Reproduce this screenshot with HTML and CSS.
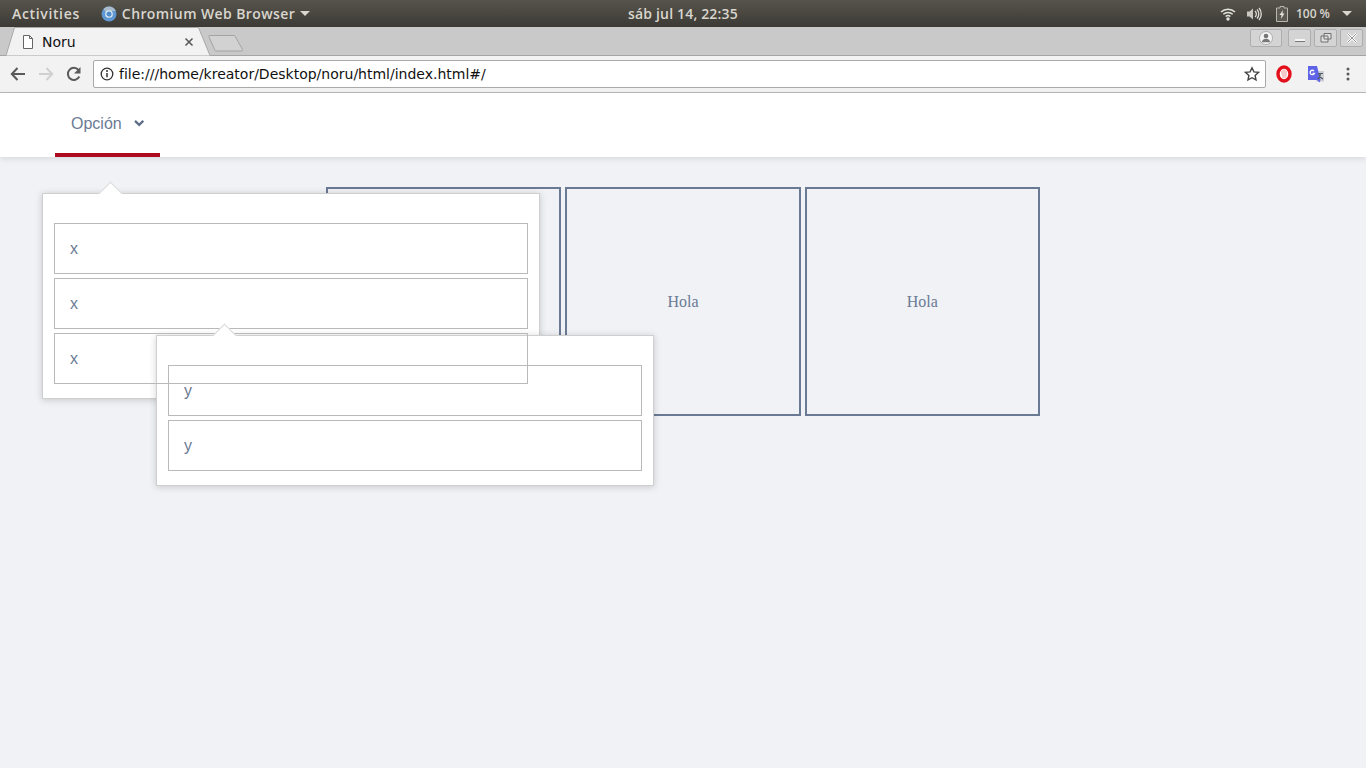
FILE: index.html
```html
<!DOCTYPE html>
<html lang="es">
<head>
  <meta charset="UTF-8">
  <title>Noru</title>
  <link rel="stylesheet" href="styles.css">
</head>
<body>

<!-- Desktop top bar -->
<div class="topbar">
  <div class="topbar-left">
    <span class="activities">Activities</span>
    <span class="app-menu">
      <svg class="chromium" width="16" height="16" viewBox="0 0 16 16">
        <circle cx="8" cy="8" r="7.5" fill="#5e97d2"/>
        <path d="M8 .5A7.5 7.5 0 0 1 14.800 5H8a3 3 0 0 0-2.700 1.700L2.500 2.900A7.500 7.500 0 0 1 8 .5z" fill="#a9bccd"/>
        <circle cx="8" cy="8" r="3.200" fill="#4f8ccc" stroke="#dbe6f0" stroke-width="1.300"/>
      </svg>
      <span>Chromium Web Browser</span>
      <i class="caret"></i>
    </span>
  </div>
  <div class="clock">sáb jul 14, 22:35</div>
  <div class="topbar-right">
    <svg width="16" height="14" viewBox="0 0 16 14">
      <path d="M1 5a10 10 0 0 1 14 0M3.300 7.300a7 7 0 0 1 9.400 0M5.600 9.500a3.600 3.600 0 0 1 4.800 0" fill="none" stroke="#e4e2dc" stroke-width="1.500"/>
      <circle cx="8" cy="12" r="1.700" fill="#e4e2dc"/>
    </svg>
    <svg class="sound" width="16" height="14" viewBox="0 0 16 14">
      <path d="M1 4.500h2.500L7 1.500v11l-3.500-3H1z" fill="#c9c7c0"/>
      <path d="M9 4a4 4 0 0 1 0 6M11 2.500a6.500 6.500 0 0 1 0 9M13 1a9 9 0 0 1 0 12" fill="none" stroke="#dedcd6" stroke-width="1.300"/>
    </svg>
    <svg class="battery" width="12" height="16" viewBox="0 0 12 16">
      <path d="M4 .5h4v1.500h3.500v13.500H.5V2H4z" fill="#5c5a53" stroke="#b8b6af"/>
      <path d="M7 4 3.500 9h2L5 13l3.500-5.500h-2z" fill="#e4e2dc"/>
    </svg>
    <span class="battery-text">100 %</span>
    <i class="caret caret-end"></i>
  </div>
</div>

<!-- Tab strip -->
<div class="tabstrip">
  <div class="tab">
    <svg class="tab-shape" width="206" height="29" viewBox="0 0 206 29">
      <path d="M0 28.500 8.500 .5H192.500L204 28.500" fill="#f2f2f2" stroke="#a8a8a8"/>
    </svg>
    <svg class="tab-file" width="12" height="14" viewBox="0 0 12 14">
      <path d="M1.500 .5h6l3 3v10h-9z M7.500 .5v3h3" fill="#fff" stroke="#666"/>
    </svg>
    <span class="tab-title">Noru</span>
    <svg class="tab-close" width="10" height="10" viewBox="0 0 10 10">
      <path d="M1.500 1.500l7 7M8.500 1.500l-7 7" stroke="#555" stroke-width="1.500"/>
    </svg>
  </div>
  <svg class="new-tab" width="36" height="18" viewBox="0 0 36 18">
    <path d="M1 1.500H26a1 1 0 0 1 1 .6L34.500 15.500a1 1 0 0 1-1 1.500H8a1 1 0 0 1-1-.6L.8 2.500a.7.7 0 0 1 .2-1z" fill="#d2d2d2" stroke="#a3a3a3"/>
  </svg>
  <div class="win-buttons">
    <span class="win-btn win-user">
      <svg width="14" height="14" viewBox="0 0 14 14">
        <circle cx="7" cy="7" r="6.500" fill="#f4f4f4" stroke="#8c8c8c" stroke-width=".6"/>
        <circle cx="7" cy="5" r="2.300" fill="#777"/>
        <path d="M2.800 11.300c.6-2.700 2.200-3.500 4.200-3.500s3.600.8 4.200 3.500" fill="#777"/>
      </svg>
    </span>
    <span class="win-btn">
      <svg width="12" height="10" viewBox="0 0 12 10"><path d="M1 7h10" stroke="#f6f6f6" stroke-width="2"/><path d="M1 8.500h10" stroke="#777"/></svg>
    </span>
    <span class="win-btn">
      <svg width="12" height="10" viewBox="0 0 12 10"><path d="M4 .5h7v5.500H4z M1 3h7v6H1z" fill="#e2e2e2" stroke="#6f6f6f"/></svg>
    </span>
    <span class="win-btn">
      <svg width="12" height="10" viewBox="0 0 12 10"><path d="M1.500 .5l9 9M10.500 .5l-9 9" stroke="#fff" stroke-width="2.400"/><path d="M1.500 .5l9 9M10.500 .5l-9 9" stroke="#777" stroke-width=".8"/></svg>
    </span>
  </div>
</div>

<!-- Address bar -->
<div class="toolbar">
  <svg class="nav-icon" width="16" height="14" viewBox="0 0 16 14">
    <path d="M15 7H2M7.500 1 1.800 7l5.700 6" fill="none" stroke="#5a5a5a" stroke-width="2"/>
  </svg>
  <svg class="nav-icon" width="16" height="14" viewBox="0 0 16 14">
    <path d="M1 7h13M8.500 1l5.700 6-5.700 6" fill="none" stroke="#d0d0d0" stroke-width="2"/>
  </svg>
  <svg class="nav-icon" width="16" height="16" viewBox="0 0 16 16">
    <path d="M13.300 10.500A6 6 0 1 1 12.500 4" fill="none" stroke="#5a5a5a" stroke-width="2"/>
    <path d="M14.500 1v6.500H8z" fill="#5a5a5a"/>
  </svg>
  <div class="omnibox">
    <svg width="14" height="14" viewBox="0 0 14 14">
      <circle cx="7" cy="7" r="5.800" fill="none" stroke="#333" stroke-width="1.300"/>
      <path d="M7 6v4.200" stroke="#333" stroke-width="1.500"/>
      <circle cx="7" cy="4" r="1" fill="#333"/>
    </svg>
    <span class="url">file:///home/kreator/Desktop/noru/html/index.html#/</span>
    <svg class="star" width="16" height="16" viewBox="0 0 16 16">
      <path d="M8 1.800l1.900 4.100 4.500.5-3.300 3 .9 4.500L8 11.700l-4 2.200.9-4.500-3.300-3 4.500-.5z" fill="none" stroke="#444" stroke-width="1.400"/>
    </svg>
  </div>
  <div class="extensions">
    <svg width="16" height="18" viewBox="0 0 16 18">
      <ellipse cx="8" cy="9" rx="6" ry="7" fill="#fff" stroke="#e3101c" stroke-width="3.400"/>
      <path d="M5 8V5.500h1.200V4.500h1V4h1.600v.5h1V6H11v4l-1 3H6.500z" fill="#f3c9c9"/>
    </svg>
    <svg width="17" height="17" viewBox="0 0 17 17">
      <path d="M9 5h8v10.500H9z" fill="#cfcfd4"/>
      <path d="M1 0h9l3.500 14 -1 2.500L10 14H1z" fill="#5f63e6"/>
      <path d="M11 7.500h5M13.500 7.500c0 2.500-1 4-2.500 5.500M12 8.500c.5 2 2 3.500 4 4.500" fill="none" stroke="#4f5a64" stroke-width="1.100"/>
      <path d="M7 5a2.200 2.200 0 1 0 .3 2.500H5.500" fill="none" stroke="#fff" stroke-width="1.300"/>
    </svg>
    <svg class="dots" width="4" height="14" viewBox="0 0 4 14">
      <circle cx="2" cy="2" r="1.500" fill="#5a5a5a"/>
      <circle cx="2" cy="7" r="1.500" fill="#5a5a5a"/>
      <circle cx="2" cy="12" r="1.500" fill="#5a5a5a"/>
    </svg>
  </div>
</div>

<!-- Page content -->
<div class="page">
  <nav class="menu">
    <div class="menu-item">
      <span>Opción</span>
      <svg class="chevron" width="12" height="8" viewBox="0 0 12 8">
        <path d="M1.200 1.500 6 6.200l4.800-4.700" fill="none" stroke="#5f6e88" stroke-width="2.600"/>
      </svg>

      <div class="dropdown dropdown-main">
        <div class="drop-list">
          <div class="drop-row">x</div>
          <div class="drop-row">x</div>
          <div class="drop-row has-sub">x
            <div class="dropdown dropdown-sub">
              <div class="drop-list">
                <div class="drop-row">y</div>
                <div class="drop-row">y</div>
              </div>
            </div>
          </div>
        </div>
      </div>
    </div>
  </nav>

  <main class="cards">
    <div class="card">Hola</div>
    <div class="card">Hola</div>
    <div class="card">Hola</div>
  </main>
</div>

</body>
</html>
```

FILE: styles.css
```css
* {
  box-sizing: border-box;
}
body {
  margin: 0;
  height: 100vh;
  display: flex;
  flex-direction: column;
  overflow: hidden;
  background: #f0f2f6;
  font-family: "Liberation Sans", sans-serif;
}

/* Desktop top bar */
.topbar {
  height: 27px;
  flex: none;
  display: grid;
  grid-template-columns: 1fr auto 1fr;
  align-items: center;
  padding: 0 12px;
  background: linear-gradient(#57544c, #3c3a35);
  color: #d9d6ce;
  font-family: "Open Sans", sans-serif;
  font-size: 14px;
  font-weight: 600;
}
.topbar-left {
  display: flex;
  align-items: center;
}
.activities {
  letter-spacing: 0.65px;
}
.app-menu {
  display: flex;
  align-items: center;
  margin-left: 21px;
  letter-spacing: 0.4px;
}
.chromium {
  margin-right: 5px;
}
.caret {
  display: inline-block;
  width: 0;
  height: 0;
  margin-left: 5px;
  border-left: 5px solid transparent;
  border-right: 5px solid transparent;
  border-top: 5px solid #d9d6ce;
}
.caret-end {
  margin-left: 12px;
}
.clock {
  letter-spacing: 0.17px;
}
.topbar-right {
  display: flex;
  align-items: center;
  justify-content: flex-end;
  margin-right: 2px;
}
.sound {
  margin-left: 10px;
}
.battery {
  margin-left: 14px;
}
.battery-text {
  margin-left: 8px;
  font-size: 12px;
}

/* Tab strip */
.tabstrip {
  height: 29px;
  flex: none;
  display: flex;
  align-items: flex-start;
  background: #c9c9c9;
  border-bottom: 1px solid #a5a5a5;
}
.tab {
  position: relative;
  width: 210px;
  height: 29px;
  flex: none;
  display: flex;
  align-items: center;
  padding: 0 16px 0 22px;
  font-family: "DejaVu Sans", sans-serif;
  font-size: 14px;
  color: #111;
}
.tab-shape {
  position: absolute;
  left: 6px;
  top: 0;
}
.tab-file,
.tab-title,
.tab-close {
  position: relative;
}
.tab-title {
  margin-left: 8px;
  flex: 1;
}
.new-tab {
  margin: 7px 0 0 -2px;
}
.win-buttons {
  display: flex;
  gap: 3px;
  margin: 2px 3px 0 auto;
}
.win-btn {
  width: 23px;
  height: 18px;
  display: flex;
  align-items: center;
  justify-content: center;
  background: #d4d4d4;
  border: 1px solid #aeaeae;
  border-radius: 2px;
}
.win-user {
  width: 32px;
  margin-right: 3px;
}

/* Address bar */
.toolbar {
  height: 37px;
  flex: none;
  display: flex;
  align-items: center;
  padding: 4px 0 4px 10px;
  gap: 12px;
  background: #f2f2f2;
  border-bottom: 1px solid #b9b9b9;
}
.nav-icon {
  flex: none;
}
.omnibox {
  flex: 1;
  height: 28px;
  margin-left: -1px;
  display: flex;
  align-items: center;
  gap: 5px;
  padding: 0 5px 0 6px;
  background: #fff;
  border: 1px solid #a9a9a9;
  border-radius: 2px;
}
.url {
  flex: 1;
  font-family: "DejaVu Sans", sans-serif;
  font-size: 14px;
  color: #111;
}
.extensions {
  flex: none;
  display: flex;
  align-items: center;
  gap: 15px;
  padding-right: 16px;
  margin-left: -2px;
}
.dots {
  margin-left: 7px;
}

/* Page */
.page {
  flex: 1;
  display: flex;
  flex-direction: column;
}
.menu {
  position: relative;
  height: 64px;
  padding-left: 55px;
  background: #fff;
  box-shadow: 0 2px 6px rgba(0, 0, 0, 0.1);
  z-index: 5;
}
.menu-item {
  position: relative;
  width: 105px;
  height: 64px;
  display: flex;
  align-items: center;
  padding: 2px 16px 0;
  border-bottom: 4px solid #ae0a1f;
  color: #6b7a94;
  font-size: 16px;
}
.chevron {
  margin: -2px 0 0 12px;
}

/* Dropdowns */
.dropdown {
  position: absolute;
  width: 498px;
  padding: 29px 11px 14px;
  background: #fff;
  border: 1px solid #cfcfcf;
  box-shadow: 0 1px 7px rgba(0, 0, 0, 0.18);
}
.dropdown::before {
  content: "";
  position: absolute;
  width: 16px;
  height: 16px;
  top: -9px;
  background: #fff;
  border-top: 1px solid #d8d8d8;
  border-left: 1px solid #d8d8d8;
  transform: rotate(45deg);
  z-index: 2;
}
.dropdown-main {
  left: -13px;
  top: 100px;
}
.dropdown-main::before {
  left: 59px;
}
.dropdown-sub {
  left: 101px;
  top: 1px;
}
.dropdown-sub::before {
  left: 59px;
}
.drop-list {
  display: flex;
  flex-direction: column;
  gap: 4px;
}
.drop-row {
  height: 51px;
  display: flex;
  align-items: center;
  padding-left: 15px;
  border: 1px solid #b9b9b9;
}
/* the outer row keeps drawing its frame on top of the sub menu */
.has-sub {
  position: relative;
}
.has-sub::after {
  content: "";
  position: absolute;
  inset: -1px;
  border: 1px solid #b9b9b9;
  z-index: 1;
  pointer-events: none;
}

/* Cards */
.cards {
  display: flex;
  gap: 4px;
  padding: 30px 0 0 326px;
}
.card {
  width: 235.33px;
  height: 229px;
  display: flex;
  align-items: center;
  justify-content: center;
  border: 2px solid #6b7a94;
  color: #6b7a94;
  font-family: "Liberation Serif", serif;
  font-size: 16px;
}
```
